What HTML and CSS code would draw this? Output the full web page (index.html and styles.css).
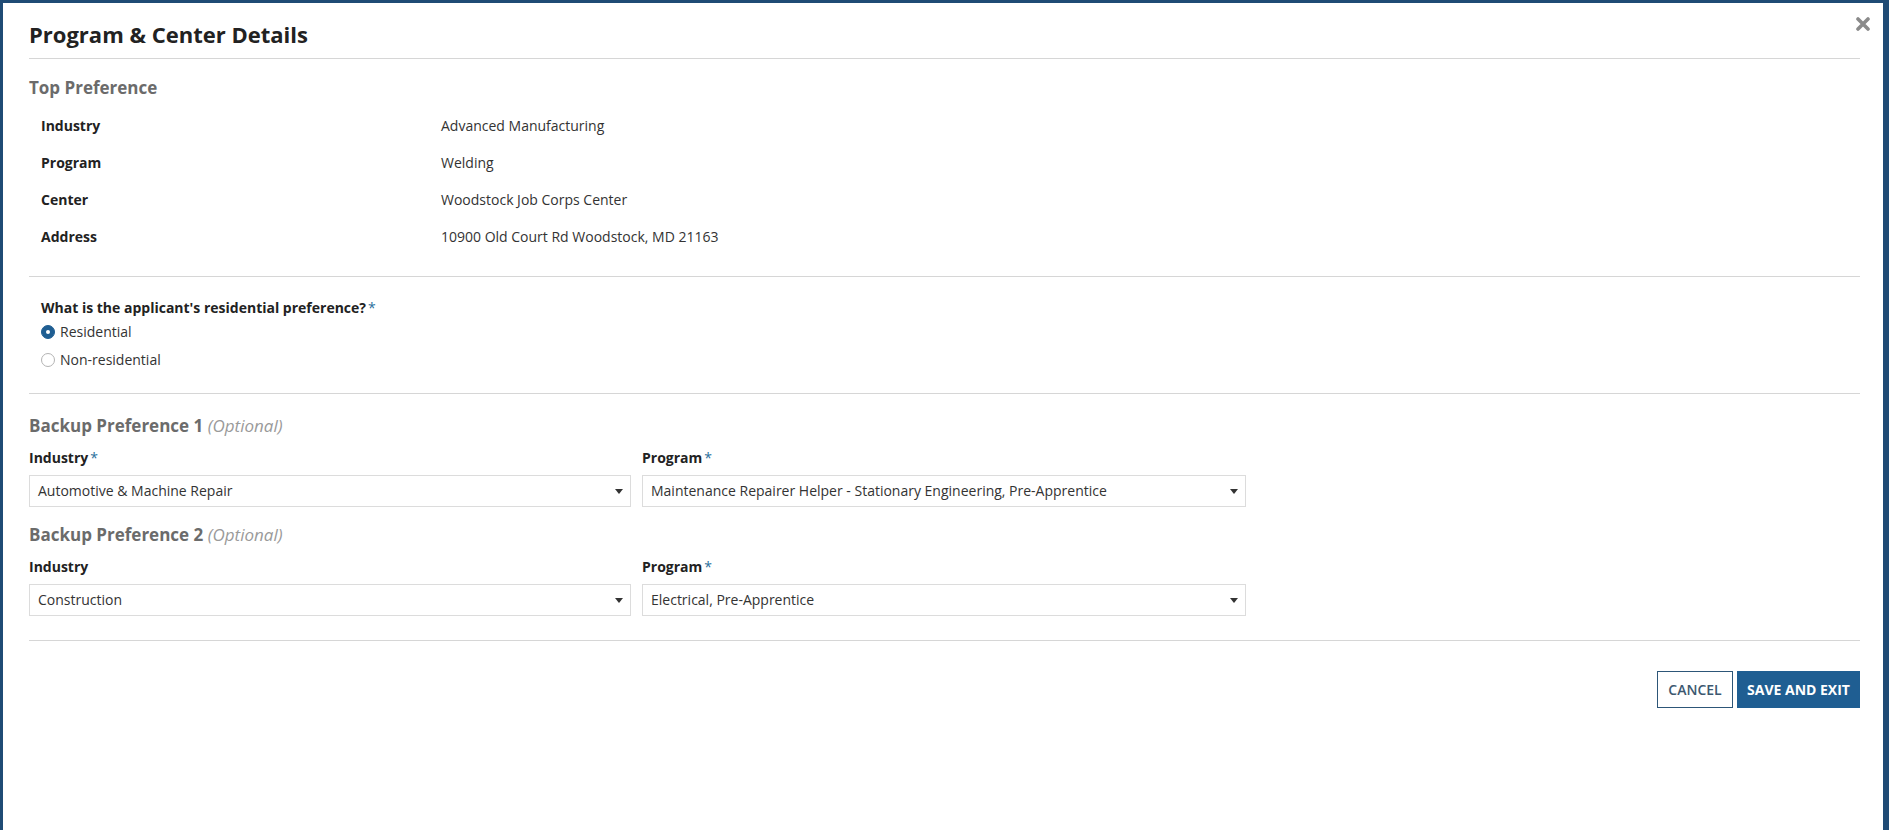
FILE: index.html
```html
<!DOCTYPE html>
<html lang="en">
<head>
    <meta charset="UTF-8">
    <meta name="viewport" content="width=device-width, initial-scale=1.0">
    <title>Program &amp; Center Details</title>
    <link rel="stylesheet" href="styles.css">
</head>
<body>
    <div class="modal">
        <button class="close" aria-label="Close">
            <svg width="14" height="14" viewBox="0 0 14 14">
                <path d="M2 2 L12 12 M12 2 L2 12" stroke="#8a8a8a" stroke-width="3.6" stroke-linecap="round"/>
            </svg>
        </button>

        <header class="modal-header">
            <h1>Program &amp; Center Details</h1>
        </header>

        <section class="section top-pref">
            <h2>Top Preference</h2>
            <dl class="details">
                <div class="row"><dt>Industry</dt><dd>Advanced Manufacturing</dd></div>
                <div class="row"><dt>Program</dt><dd>Welding</dd></div>
                <div class="row"><dt>Center</dt><dd>Woodstock Job Corps Center</dd></div>
                <div class="row"><dt>Address</dt><dd>10900 Old Court Rd Woodstock, MD 21163</dd></div>
            </dl>
        </section>

        <section class="section residential">
            <p class="question">What is the applicant's residential preference?<span class="req">*</span></p>
            <label class="radio"><span class="dot checked"></span>Residential</label>
            <label class="radio"><span class="dot"></span>Non-residential</label>
        </section>

        <section class="section backups">
            <h2>Backup Preference 1 <em>(Optional)</em></h2>
            <div class="fields">
                <div class="field">
                    <label>Industry<span class="req">*</span></label>
                    <div class="select">Automotive &amp; Machine Repair<span class="caret"></span></div>
                </div>
                <div class="field">
                    <label>Program<span class="req">*</span></label>
                    <div class="select">Maintenance Repairer Helper - Stationary Engineering, Pre-Apprentice<span class="caret"></span></div>
                </div>
            </div>

            <h2 class="second">Backup Preference 2 <em>(Optional)</em></h2>
            <div class="fields">
                <div class="field">
                    <label>Industry</label>
                    <div class="select">Construction<span class="caret"></span></div>
                </div>
                <div class="field">
                    <label>Program<span class="req">*</span></label>
                    <div class="select">Electrical, Pre-Apprentice<span class="caret"></span></div>
                </div>
            </div>
        </section>

        <footer class="actions">
            <button class="btn btn-outline">CANCEL</button>
            <button class="btn btn-primary">SAVE AND EXIT</button>
        </footer>
    </div>
</body>
</html>
```

FILE: styles.css
```css
:root {
    --backdrop: #1f4b75;
    --blue: #1f5e92;
    --text: #222222;
    --text-body: #333333;
    --muted: #6b6b6b;
    --light: #9a9a9a;
    --line: #d6d6d6;
    --field-border: #dcdcdc;
}

* {
    margin: 0;
    padding: 0;
    box-sizing: border-box;
}

body {
    font-family: 'Open Sans', 'Noto Sans', sans-serif;
    background-color: var(--backdrop);
    color: var(--text);
    height: 830px;
    overflow: hidden;
    padding: 3px 6px 0 3px;
}

.modal {
    position: relative;
    background: #ffffff;
    height: 100%;
    padding: 0 23px 0 26px;
}

.close {
    position: absolute;
    top: 13px;
    right: 12px;
    background: none;
    border: none;
    width: 16px;
    height: 16px;
    display: flex;
    align-items: center;
    justify-content: center;
    cursor: pointer;
}

.modal-header {
    padding-top: 17px;
    padding-bottom: 10px;
    border-bottom: 1px solid var(--line);
}

.modal-header h1 {
    font-size: 22px;
    font-weight: 700;
    line-height: 28px;
    color: var(--text);
}

.section {
    border-bottom: 1px solid var(--line);
}

.section h2 {
    font-size: 17px;
    font-weight: 700;
    line-height: 22px;
    color: var(--muted);
}

.section h2 em {
    font-weight: 400;
    font-style: italic;
    color: var(--light);
}

.top-pref {
    padding-top: 18px;
    padding-bottom: 21px;
}

.details {
    padding-top: 8px;
    padding-left: 12px;
}

.details .row {
    display: flex;
    height: 37px;
    align-items: center;
    font-size: 14px;
}

.details dt {
    width: 400px;
    font-weight: 700;
    color: var(--text);
}

.details dd {
    color: var(--text-body);
}

.req {
    color: #2b6f9c;
    font-weight: 400;
    margin-left: 2px;
}

.residential {
    padding: 21px 0 19px 12px;
}

.question {
    font-size: 14px;
    font-weight: 700;
    line-height: 20px;
}

.radio {
    display: flex;
    align-items: center;
    gap: 5px;
    font-size: 14px;
    line-height: 20px;
    height: 28px;
    color: var(--text-body);
}

.dot {
    width: 14px;
    height: 14px;
    border-radius: 50%;
    border: 1px solid #b3b3b3;
    background: #fff;
    position: relative;
}

.dot.checked {
    background: var(--blue);
    border-color: var(--blue);
}

.dot.checked::after {
    content: '';
    position: absolute;
    left: 4px;
    top: 4px;
    width: 4px;
    height: 4px;
    border-radius: 50%;
    background: #fff;
}

.backups {
    padding-top: 21px;
    padding-bottom: 24px;
}

.backups h2.second {
    margin-top: 17px;
}

.fields {
    display: grid;
    grid-template-columns: 602px 604px;
    column-gap: 11px;
    margin-top: 11px;
}

.field label {
    display: block;
    font-size: 14px;
    font-weight: 700;
    line-height: 20px;
    margin-bottom: 7px;
}

.select {
    position: relative;
    height: 32px;
    border: 1px solid var(--field-border);
    padding: 0 30px 0 8px;
    font-size: 14px;
    line-height: 30px;
    color: var(--text-body);
}

.caret {
    position: absolute;
    right: 7px;
    top: 13px;
    border-left: 4px solid transparent;
    border-right: 4px solid transparent;
    border-top: 5px solid #333;
}

.actions {
    display: flex;
    justify-content: flex-end;
    gap: 4px;
    padding-top: 30px;
}

.btn {
    height: 37px;
    font-family: inherit;
    font-size: 14px;
    font-weight: 700;
    padding: 0;
    cursor: pointer;
}

.btn-outline {
    width: 76px;
    background: #fff;
    border: 1px solid #2d5678;
    color: #3d5870;
    font-weight: 600;
}

.btn-primary {
    width: 123px;
    background: var(--blue);
    border: 1px solid var(--blue);
    color: #fff;
}
```
